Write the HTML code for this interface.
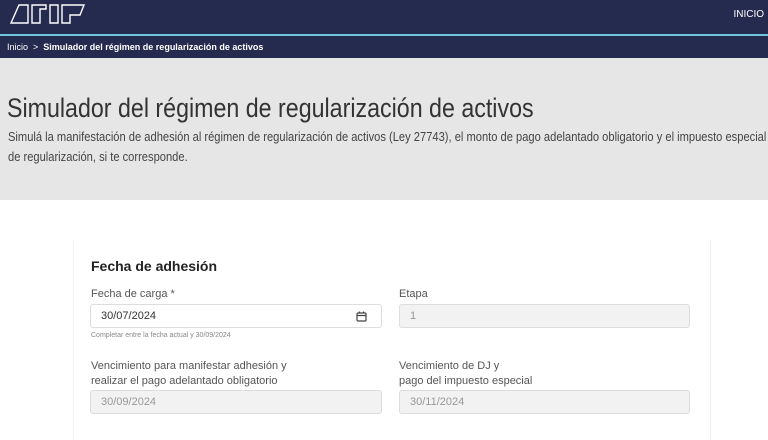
<!DOCTYPE html>
<html><head><meta charset="utf-8"><style>
*{margin:0;padding:0;box-sizing:border-box}
body{width:768px;height:432px;overflow:hidden;background:#fff;font-family:"Liberation Sans",sans-serif;color:#333;position:relative}
.top{position:absolute;left:0;top:0;width:768px;height:34px;background:#252a4f}
.cy{position:absolute;left:0;top:34px;width:768px;height:2px;background:#6ec6dc}
.bc{position:absolute;left:0;top:36px;width:768px;height:22px;background:#252a4f;color:#fff;font-size:9px;line-height:22px;padding-left:7px}
.bc b{font-weight:bold}
.inicio{position:absolute;right:4px;top:9px;color:#fff;font-size:10px}
.hero{position:absolute;left:0;top:58px;width:768px;height:142px;background:#e6e6e6}
h1{position:absolute;left:7px;top:93px;font-weight:normal;font-size:27px;color:#333;white-space:nowrap;transform:scaleX(0.86);transform-origin:left top}
.desc{position:absolute;left:8px;top:127px;font-size:12.6px;line-height:20px;color:#444;width:862px;transform:scaleX(0.885);transform-origin:left top}
.card{position:absolute;left:73px;top:240px;width:638px;height:200px;border-left:1px solid #f2f2f2;border-right:1px solid #eee}
.h2{position:absolute;left:91px;top:258px;font-size:14px;font-weight:bold;color:#222}
.lab{position:absolute;font-size:11px;color:#555;line-height:15px}
.inp{position:absolute;height:24px;border:1px solid #ddd;border-radius:3px;font-size:11px;line-height:22px;padding-left:10px;color:#333}
.dis{background:#f2f2f2;color:#999}
.hint{position:absolute;left:91px;top:332px;font-size:7px;color:#888}
</style></head><body>
<div class="top">
<svg style="position:absolute;left:10px;top:4px" width="76" height="20" viewBox="0 0 76 20" fill="none" stroke="#fff" stroke-width="1.4">
<path d="M1 19 L9 1 H18 V19 Z"/>
<path d="M22 1 H36 V5 H30 V19 H22 Z"/>
<path d="M40 1 H48 V19 H40 Z"/>
<path d="M52 1 H74 L70 11 H60 V19 H52 Z"/>
</svg>
<div class="inicio">INICIO</div>
</div>
<div class="cy"></div>
<div class="bc">Inicio &nbsp;&gt;&nbsp; <b>Simulador del régimen de regularización de activos</b></div>
<div class="hero"></div>
<h1>Simulador del régimen de regularización de activos</h1>
<div class="desc">Simulá la manifestación de adhesión al régimen de regularización de activos (Ley 27743), el monto de pago adelantado obligatorio y el impuesto especial de regularización, si te corresponde.</div>
<div class="card"></div>
<div class="h2">Fecha de adhesión</div>
<div class="lab" style="left:91px;top:287px">Fecha de carga *</div>
<div class="inp" style="left:90px;top:304px;width:292px">30/07/2024
<svg style="position:absolute;right:14px;top:6px" width="11" height="11" viewBox="0 0 11 11" fill="none" stroke="#444" stroke-width="1.2"><rect x="1" y="2" width="9" height="8" rx="1"/><path d="M1 4.5H10M3.5 0.5V2.5M7.5 0.5V2.5"/></svg>
</div>
<div class="hint">Completar entre la fecha actual y 30/09/2024</div>
<div class="lab" style="left:399px;top:287px">Etapa</div>
<div class="inp dis" style="left:399px;top:304px;width:291px">1</div>
<div class="lab" style="left:91px;top:359px">Vencimiento para manifestar adhesión y<br>realizar el pago adelantado obligatorio</div>
<div class="inp dis" style="left:90px;top:390px;width:292px">30/09/2024</div>
<div class="lab" style="left:399px;top:359px">Vencimiento de DJ y<br>pago del impuesto especial</div>
<div class="inp dis" style="left:399px;top:390px;width:291px">30/11/2024</div>
</body></html>
